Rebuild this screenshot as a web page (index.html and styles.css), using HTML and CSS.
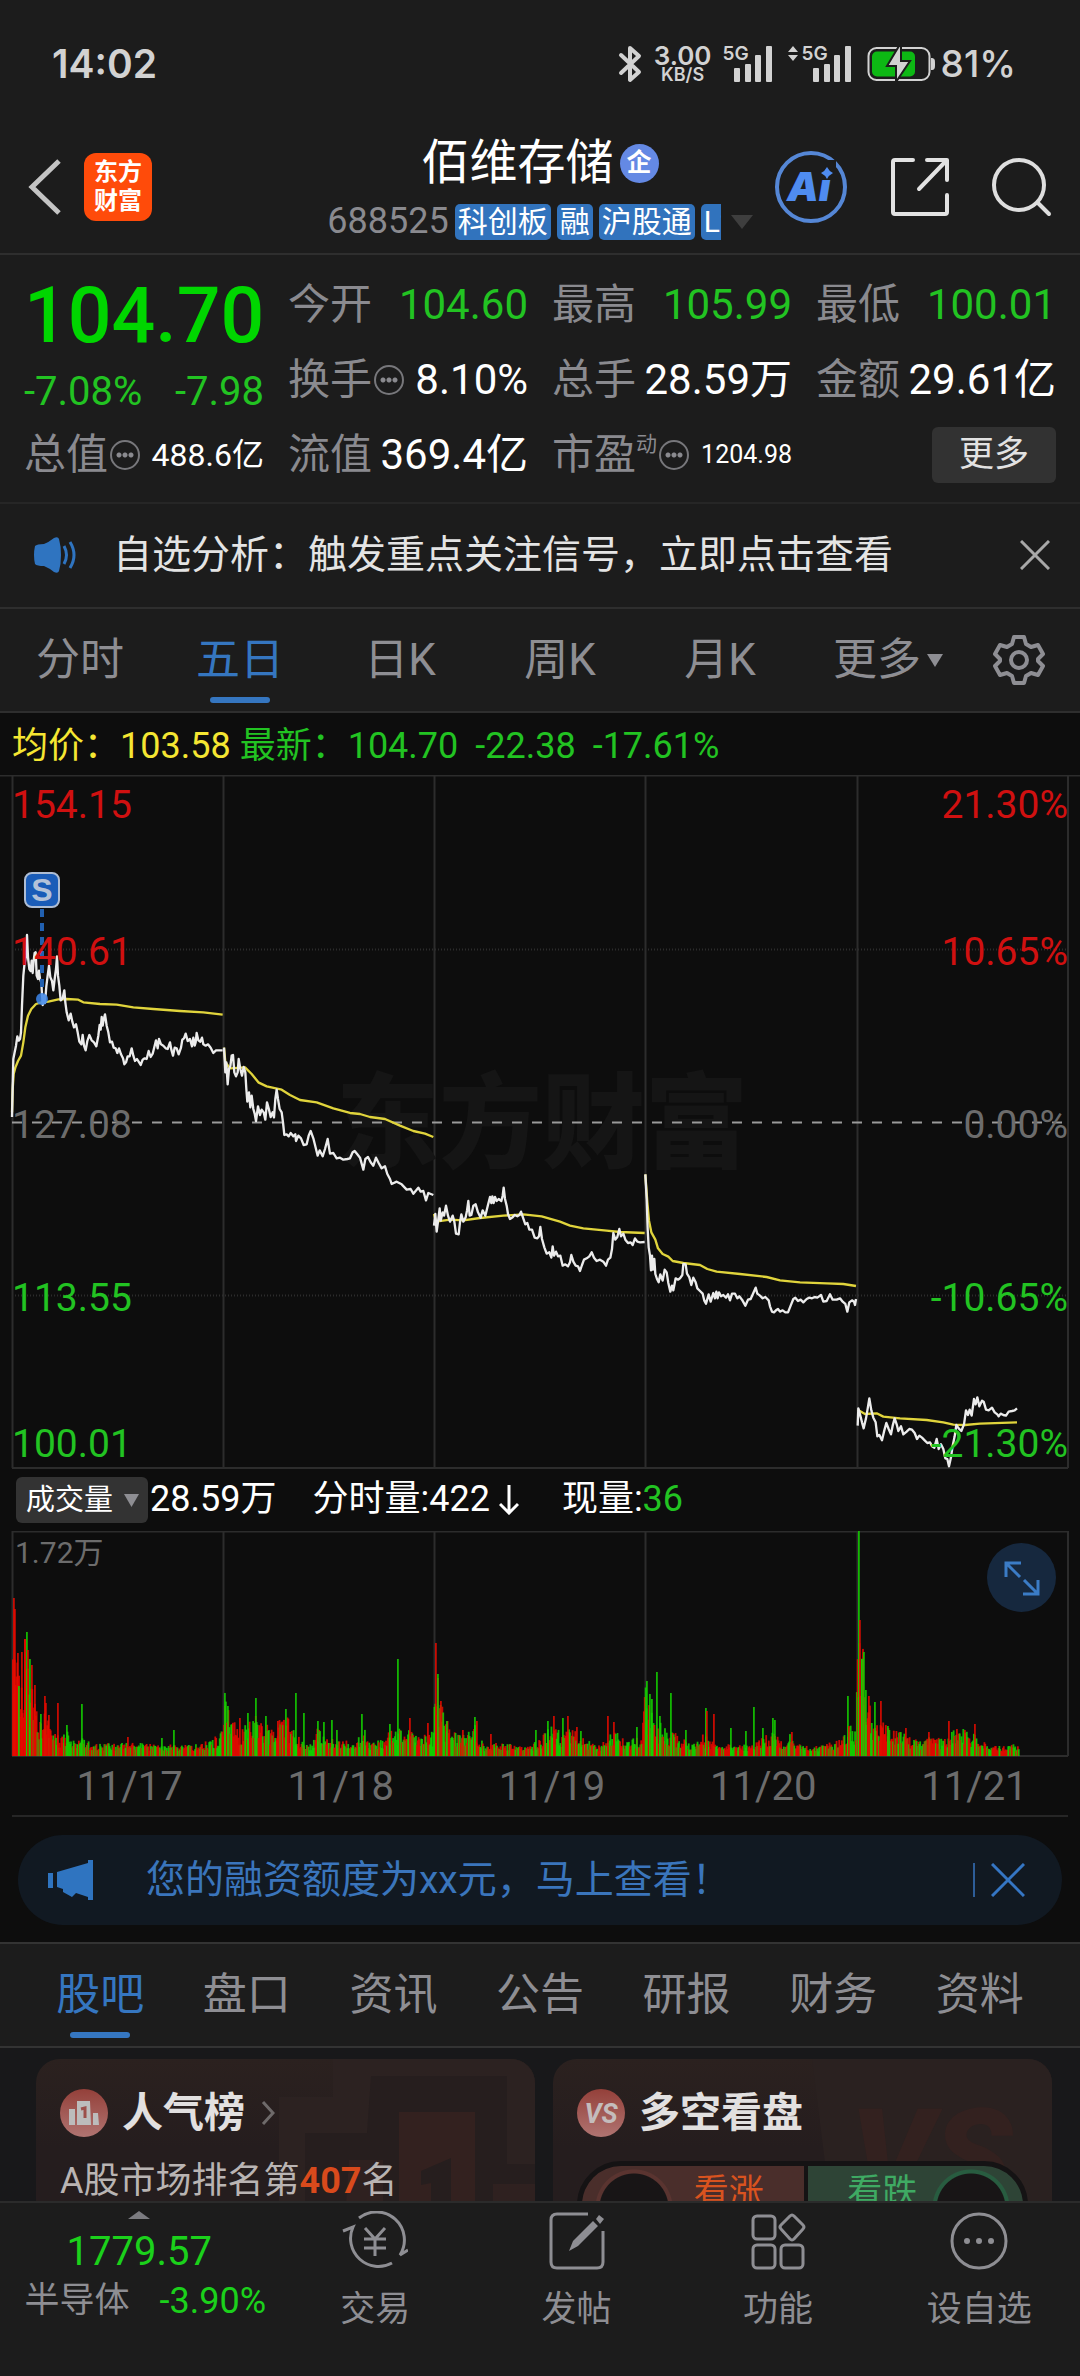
FILE: index.html
```html
<!DOCTYPE html>
<html lang="zh-CN">
<head>
<meta charset="utf-8">
<meta name="viewport" content="width=device-width, initial-scale=1">
<title>佰维存储 688525</title>
<link rel="stylesheet" href="styles.css">
</head>
<body>
<div class="app">
  <div class="status">
    <span class="status-time">14:02</span>
    <div class="status-right">
      <svg class="bt" width="24" height="38" viewBox="0 0 24 38" fill="none" stroke="currentColor" stroke-width="4" stroke-linejoin="round" stroke-linecap="round"><path d="M3 10 21 27 12 35V3l9 8L3 28"/></svg>
      <span class="speed"><b>3.00</b><small>KB/S</small></span>
      <span class="sim"><span>5G</span>
        <svg width="38" height="36" viewBox="0 0 38 36" fill="currentColor"><rect y="22" width="6" height="14" rx="1"/><rect x="11" y="18" width="6" height="18" rx="1"/><rect x="21" y="9" width="6" height="27" rx="1"/><rect x="32" width="6" height="36" rx="1"/></svg>
      </span>
      <span class="sim sim-two">
        <svg class="updown" width="10" height="15" viewBox="0 0 10 15" fill="currentColor"><path d="M5 0l5 6H0zM5 15l5-6H0z"/></svg>
        <span>5G</span>
        <svg width="38" height="36" viewBox="0 0 38 36" fill="currentColor"><rect y="22" width="6" height="14" rx="1"/><rect x="11" y="18" width="6" height="18" rx="1"/><rect x="21" y="9" width="6" height="27" rx="1"/><rect x="32" width="6" height="36" rx="1"/></svg>
      </span>
      <svg class="battery" width="68" height="36" viewBox="0 0 68 36"><rect x="1.500" y="2" width="61" height="32" rx="8" fill="none" stroke="#d2d2d2" stroke-width="2"/><rect x="5" y="5.500" width="43" height="25" rx="5" fill="#0db814"/><path d="M64 12c4 0 4 2 4 6s0 6-4 6z" fill="#d2d2d2"/><path d="M32 0 20 20h9v16l14-21h-9V0z" fill="#d2d2d2" stroke="#1c1c1c" stroke-width="2"/></svg>
      <span class="percent">81%</span>
    </div>
  </div>

  <header class="header">
    <div class="header-left">
      <button class="icon-btn" aria-label="返回"><svg width="34" height="56" viewBox="0 0 34 56" fill="none" stroke="#c4c4c4" stroke-width="5"><path d="M31 2 4 28l27 26"/></svg></button>
      <a class="logo" href="#">东方<br>财富</a>
    </div>
    <div class="header-title">
      <h1>佰维存储<span class="badge">企</span></h1>
      <div class="code-row">
        <span class="code">688525</span>
        <div class="tags"><span>科创板</span><span>融</span><span>沪股通</span><span class="tag-cut">L2</span></div>
        <svg width="22" height="16" viewBox="0 0 22 16"><path d="M0 1h22L11 15z" fill="#3e3e3e"/></svg>
      </div>
    </div>
    <div class="header-right">
      <button class="icon-btn" aria-label="Ai"><svg width="74" height="74" viewBox="0 0 74 74"><circle cx="37" cy="37" r="34" fill="none" stroke="#5587d6" stroke-width="4"/><text x="13" y="51" class="ai-text">Ai</text><rect x="45" y="10" width="17" height="20" fill="#1c1c1c"/><path d="M53 17q2 4 6 6-4 2-6 6-2-4-6-6 4-2 6-6z" fill="#4f8cf0"/></svg></button>
      <button class="icon-btn" aria-label="分享"><svg width="60" height="60" viewBox="0 0 60 60" fill="none" stroke="#e2e2e2" stroke-width="4" stroke-linecap="round" stroke-linejoin="round"><path d="M23 3H5q-2 0-2 2v50q0 2 2 2h50q2 0 2-2V38M37 3h20v20M55 5 29 32"/></svg></button>
      <button class="icon-btn" aria-label="搜索"><svg width="60" height="60" viewBox="0 0 60 60" fill="none" stroke="#dedede" stroke-width="4" stroke-linecap="round"><circle cx="27" cy="28" r="25"/><path d="M46 46l11 11"/></svg></button>
    </div>
  </header>

  <section class="quote">
    <div class="price-cell">
      <div class="price">104.70</div>
      <div class="change"><span>-7.08%</span><span>-7.98</span></div>
    </div>
    <div class="cell"><span class="label">今开</span><span class="val green">104.60</span></div>
    <div class="cell"><span class="label">最高</span><span class="val green">105.99</span></div>
    <div class="cell"><span class="label">最低</span><span class="val green">100.01</span></div>
    <div class="cell"><span class="label">换手<i class="dots"></i></span><span class="val">8.10%</span></div>
    <div class="cell"><span class="label">总手</span><span class="val">28.59万</span></div>
    <div class="cell"><span class="label">金额</span><span class="val">29.61亿</span></div>
    <div class="cell"><span class="label">总值<i class="dots"></i></span><span class="val val-mid">488.6亿</span></div>
    <div class="cell"><span class="label">流值</span><span class="val">369.4亿</span></div>
    <div class="cell"><span class="label">市盈<sup>动</sup><i class="dots"></i></span><span class="val val-small">1204.98</span></div>
    <div class="cell cell-end"><button class="more-btn">更多</button></div>
  </section>

  <section class="notice">
    <svg width="46" height="36" viewBox="0 0 46 36"><path d="M2 9q2-2 9-2 5-2 10-6 4-2 5 1 2 7 2 16t-2 16q-1 3-5 1-5-4-10-6-7 0-9-2-2-9 0-18z" fill="#2f74c0"/><path d="M31 9q5 9 0 18M37 5q8 13 0 26" fill="none" stroke="#2f74c0" stroke-width="3"/></svg>
    <p>自选分析：触发重点关注信号，立即点击查看</p>
    <button class="icon-btn" aria-label="关闭"><svg width="30" height="30" viewBox="0 0 30 30" stroke="#a8a8a8" stroke-width="3"><path d="M1 1l28 28M29 1 1 29"/></svg></button>
  </section>

  <nav class="chart-tabs">
    <button>分时</button><button class="active">五日</button><button>日K</button><button>周K</button><button>月K</button>
    <button>更多<svg width="16" height="13" viewBox="0 0 16 13"><path d="M0 0h16L8 13z" fill="#8e8e93"/></svg></button>
    <button aria-label="设置"><svg width="52" height="52" viewBox="0 0 52 52" fill="none" stroke="#8e8e93" stroke-width="4" stroke-linejoin="round"><path d="M21 3h10l2 7 5 3 7-2 5 9-5 5v2l5 5-5 9-7-2-5 3-2 7H21l-2-7-5-3-7 2-5-9 5-5v-2l-5-5 5-9 7 2 5-3z"/><circle cx="26" cy="26" r="8"/></svg></button>
  </nav>

  <main class="content">
    <div class="chart-info"><span class="yellow">均价：103.58</span><span class="green">最新：104.70</span><span class="green gap">-22.38</span><span class="green gap">-17.61%</span></div>

    <svg class="price-chart" viewBox="0 776 1080 694" role="img" aria-label="五日分时走势">
      <g class="grid-lines">
        <path d="M0 776.500H1080M12.500 777V1469M223.500 777V1469M434.500 777V1469M645.500 777V1469M857.500 777V1469M1068 777V1469M12 1469H1068"/>
        <path d="M12 950.500H1068M12 1296.500H1068" stroke-dasharray="1 2"/>
      </g>
      <text class="watermark" x="336" y="1161">东方财富</text>
      <path d="M12 1123.500H1068" stroke="#9a9a9a" stroke-width="2" stroke-dasharray="10 10"/>
      <g class="avg">
        <polyline transform="translate(0 780) scale(.33333)" points="36,1000 38,930 41,885 46,866 54,846 63,830 70,790 76,745 84,710 94,690 108,675 125,670 145,668 175,661 200,660 235,662 250,670 300,675 350,677 400,685 460,690 540,696 610,700 668,707"/>
        <polyline transform="translate(0 780) scale(.33333)" points="672,806 676,850 690,868 735,865 755,885 775,910 800,922 845,932 870,948 900,963 950,970 1000,988 1050,1002 1080,1005 1110,1014 1155,1020 1200,1040 1240,1056 1275,1064 1300,1074"/>
        <polyline transform="translate(420 1000) scale(.33333)" points="42,645 48,668 90,662 130,664 180,657 250,650 310,646 365,652 420,668 450,680 490,688 560,695 600,699 674,702"/>
        <polyline transform="translate(420 1000) scale(.33333)" points="676,526 682,610 687,665 694,700 706,722 714,748 728,765 745,773 758,786 790,792 840,798 862,810 890,818 960,825 1040,834 1080,844 1140,850 1220,853 1270,855 1308,861"/>
        <polyline transform="translate(640 1150) scale(.33333)" points="653,782 675,795 710,793 730,803 780,808 860,813 910,820 940,827 975,828 1020,824 1131,820"/>
      </g>
      <g class="last">
        <polyline transform="translate(0 780) scale(.33333)" points="36,1014 38,920 40,840 44,820 48,800 52,772 56,785 60,780 63,760 66,680 70,590 73,560 78,530 81,468 84,535 88,570 92,576 95,545 98,582 101,545 104,522 107,520 110,590 114,600 117,575 120,600 124,612 128,678 132,650 135,672 139,622 143,590 147,560 151,595 156,606 160,634 164,600 168,570 171,532 174,590 178,620 182,664 188,658 193,634 196,670 200,700 206,724 212,704 217,728 222,745 228,736 233,760 238,788 244,796 248,768 252,800 257,814 262,786 268,768 275,784 282,790 289,802 295,770 299,738 302,752 305,714 308,740 311,722 315,706 320,740 325,760 330,790 336,788 341,806 347,808 352,822 357,808 363,826 369,838 373,856 378,850 383,832 389,832 395,808 400,830 405,846 411,840 416,848 422,858 428,842 434,838 440,840 446,816 452,834 458,824 464,800 468,784 473,808 477,780 483,796 490,800 497,808 503,810 510,790 514,812 519,830 524,806 530,808 536,826 543,806 547,782 552,778 557,764 563,786 570,780 576,802 580,776 584,800 587,790 590,762 595,784 601,788 606,776 610,796 617,800 624,796 632,806 640,822 648,814 656,814 668,814"/>
        <polyline transform="translate(0 780) scale(.33333)" points="672,806 676,880 679,850 683,916 687,870 691,862 695,830 699,828 703,880 708,892 713,880 716,840 721,870 726,890 731,864 736,880 739,930 742,968 747,940 751,985 755,950 760,990 764,1004 768,1026 774,982 780,1008 785,992 791,1000 796,1022 801,970 806,988 812,1014 818,1000 822,1015 826,960 830,932 834,960 839,990 845,1000 849,1030 853,1068 860,1066 866,1072 872,1062 880,1072 886,1066 888,1086 895,1070 903,1078 911,1098 920,1096 926,1070 932,1056 940,1078 948,1110 953,1130 959,1114 968,1132 975,1110 983,1080 990,1124 1000,1122 1010,1138 1020,1136 1030,1142 1042,1140 1050,1138 1058,1120 1064,1116 1072,1126 1080,1136 1090,1172 1096,1140 1104,1134 1112,1150 1120,1160 1128,1136 1136,1152 1145,1168 1155,1162 1162,1185 1170,1200 1175,1215 1190,1208 1205,1216 1220,1232 1232,1230 1240,1244 1255,1226 1262,1238 1270,1236 1278,1264 1285,1242 1300,1248"/>
        <polyline transform="translate(420 1000) scale(.33333)" points="42,680 46,645 50,698 55,660 59,628 62,665 68,640 72,650 78,620 84,650 90,668 98,650 103,668 108,704 116,706 120,670 124,646 130,668 137,655 141,635 145,606 149,650 154,648 160,620 167,616 174,640 182,656 188,634 196,650 203,622 210,594 214,612 217,592 221,612 225,594 230,606 236,600 244,606 248,590 251,566 255,600 260,620 264,645 270,660 278,655 284,648 292,652 298,648 303,638 309,656 316,676 322,672 328,692 336,692 344,716 352,718 357,712 361,684 366,720 373,745 380,764 388,760 394,776 398,742 402,770 408,758 414,772 421,770 428,800 436,796 444,802 450,790 454,768 460,788 467,800 474,802 480,816 486,798 492,782 500,778 508,772 515,760 522,776 530,786 540,782 550,788 558,800 564,782 571,776 576,750 580,702 586,722 592,714 598,690 603,712 610,704 616,722 624,732 632,730 638,738 645,718 652,728 660,730 674,729"/>
        <polyline transform="translate(420 1000) scale(.33333)" points="676,526 680,600 683,690 686,745 690,770 693,814 696,770 699,812 703,780 706,825 711,840 716,850 721,826 728,845 734,812 740,820 745,852 751,878 756,860 760,874 767,838 774,842 780,838 787,828 790,795 797,796 801,824 808,835 814,858 820,836 827,850 832,868 840,876 848,884 853,905 858,914 866,886 872,908 880,882 885,898 889,878 893,898 897,880 903,892 910,888 918,896 924,886 930,904 936,884 945,884 952,898 958,892 966,902 976,920 984,902 992,900 1000,882 1007,866 1012,884 1020,890 1028,898 1036,894 1046,904 1050,922 1056,938 1062,940 1068,934 1074,930 1080,938 1088,934 1096,940 1104,940 1112,920 1120,900 1126,896 1134,906 1142,902 1150,910 1160,900 1168,896 1176,898 1184,894 1192,896 1203,888 1210,908 1220,906 1230,886 1238,902 1250,902 1260,898 1268,908 1276,915 1282,938 1288,910 1296,904 1302,908 1305,918 1308,900"/>
        <polyline transform="translate(640 1150) scale(.33333)" points="653,830 655,778 661,800 666,820 671,838 678,808 682,785 688,748 694,784 700,806 707,820 712,862 718,858 726,874 732,848 739,822 746,840 753,856 758,830 764,808 770,826 775,846 783,832 790,856 800,848 808,840 816,842 824,852 831,870 838,860 846,866 854,874 862,882 870,880 876,892 883,896 890,870 896,900 903,886 910,900 916,928 922,930 927,952 933,925 938,890 944,862 949,828 956,838 964,846 972,826 978,784 984,798 989,782 995,800 1002,750 1007,766 1012,745 1018,772 1026,755 1031,758 1038,782 1046,784 1056,776 1064,790 1072,796 1076,802 1082,794 1090,798 1098,800 1106,788 1116,786 1124,784 1131,778"/>
      </g>
      <path d="M42 910V992" stroke="#2160b0" stroke-width="4" stroke-dasharray="8 6"/>
      <circle cx="42" cy="1000" r="6" fill="#3d86ea" opacity=".85"/>
      <rect x="25" y="874" width="34" height="34" rx="7" fill="#1a5cb8" stroke="#aebdd4" stroke-width="2"/>
      <text class="sell-mark" x="42" y="902">S</text>
      <g class="axis">
        <text class="up" x="12" y="819">154.15</text><text class="up" x="12" y="966">140.61</text><text class="flat" x="12" y="1139">127.08</text><text class="down" x="12" y="1312">113.55</text><text class="down" x="12" y="1458">100.01</text>
      </g>
      <g class="axis axis-right">
        <text class="up" x="1068" y="819">21.30%</text><text class="up" x="1068" y="966">10.65%</text><text class="flat" x="1068" y="1139">0.00%</text><text class="down" x="1068" y="1312">-10.65%</text><text class="down" x="1068" y="1458">-21.30%</text>
      </g>
    </svg>

    <div class="vol-info">
      <button class="vol-select">成交量<svg width="15" height="13" viewBox="0 0 15 13"><path d="M0 0h15L7.500 13z" fill="#8e8e93"/></svg></button>
      <span class="vol-total">28.59万</span><span class="vol-minute">分时量:422<svg width="20" height="30" viewBox="0 0 20 30" fill="none" stroke="#fff" stroke-width="3"><path d="M10 0v28M1 19l9 9 9-9"/></svg></span><span>现量:<span class="green">36</span></span>
    </div>

    <div class="vol-wrap">
      <svg class="vol-chart" viewBox="0 1532 1080 228" role="img" aria-label="成交量">
        <path class="frame" d="M12 1532.500H1068M12.500 1532V1757M223.500 1532V1757M434.500 1532V1757M645.500 1532V1757M857.500 1532V1757M1068 1532V1757M12 1757H1068"/>
        <g id="bars"></g>
        <text class="vol-max" x="15" y="1564">1.72万</text>
      </svg>
      <button class="expand" aria-label="全屏"><svg width="36" height="36" viewBox="0 0 36 36" fill="none" stroke="#3b7cc6" stroke-width="3"><path d="M2 17V3h15M3 4l13 13M34 20v14H19M33 33 20 20"/></svg></button>
    </div>
    <div class="dates"><span>11/17</span><span>11/18</span><span>11/19</span><span>11/20</span><span>11/21</span></div>

    <div class="promo">
      <svg width="46" height="40" viewBox="0 0 46 40" fill="#2f74c0"><path d="M0 13h5v15H0zM9 12 40 3V0h5v40h-5v-3l-12-4-4 4-9-5v-3l-6-2z"/></svg>
      <p>您的融资额度为xx元，马上查看！</p>
      <button class="icon-btn promo-close" aria-label="关闭"><svg width="34" height="34" viewBox="0 0 34 34" stroke="#3576c4" stroke-width="3"><path d="M1 1l32 32M33 1 1 33"/></svg></button>
    </div>

    <nav class="info-tabs"><button class="active">股吧</button><button>盘口</button><button>资讯</button><button>公告</button><button>研报</button><button>财务</button><button>资料</button></nav>

    <div class="cards">
      <article class="card">
        <svg class="card-art" width="300" height="160" viewBox="0 0 300 160"><path d="M98 0H300V160H44V38H98z" fill="#2c2221"/><path d="M136 17H272V105H300V160H70V74H132z" fill="#261e1e"/><path d="M164 53H240V160H164z" fill="#33211f"/><path d="M114 101H148V160H110zM258 125H300V160H258z" fill="#2f2120"/><path d="M186 112 216 99V160H196V124L186 126z" fill="#261e1e"/></svg>
        <h2><svg width="48" height="48" viewBox="0 0 48 48"><defs><linearGradient id="rd" x2="0" y2="1"><stop stop-color="#94403a"/><stop offset="1" stop-color="#b07471"/></linearGradient></defs><circle cx="24" cy="24" r="24" fill="url(#rd)"/><path d="M9 20h6v16H9zM17 12h13l1 24H17zM33 24h5l1 12h-6z" fill="#bcbcbc"/><path d="M21 20l4-1v10" fill="none" stroke="#9c4f4a" stroke-width="3"/></svg>人气榜<svg class="chev" width="14" height="24" viewBox="0 0 14 24" fill="none" stroke="#6e6a6a" stroke-width="3"><path d="M2 1l10 11L2 23"/></svg></h2>
        <p>A股市场排名第<b>407</b>名</p>
      </article>
      <article class="card">
        <svg class="card-art" width="300" height="160" viewBox="0 0 300 160"><path d="M60 0H300V160H80z" fill="#2a2120"/><text x="98" y="142" class="art-vs">VS</text></svg>
        <h2><svg width="48" height="48" viewBox="0 0 48 48"><circle cx="24" cy="24" r="24" fill="url(#rd)"/><text x="24" y="34" class="vs">VS</text></svg>多空看盘</h2>
        <div class="vote"><button class="vote-up">看涨</button><button class="vote-down">看跌</button></div>
      </article>
    </div>
  </main>

  <nav class="bottom">
    <a class="index" href="#">
      <svg width="22" height="8" viewBox="0 0 22 8"><path d="M11 0 22 8H0z" fill="#7b7b80"/></svg>
      <span class="index-val">1779.57</span>
      <span class="index-row"><span>半导体</span><span class="index-pct">-3.90%</span></span>
    </a>
    <a href="#"><svg width="66" height="60" viewBox="0 0 66 60" fill="none" stroke="#8e8e93" stroke-width="3"><path d="M17 7A28 28 0 0 1 58 44l8-5M50 52A28 28 0 0 1 11 16l-10 4"/><path d="M23 17l10 11 10-11M33 28v17M22 28h22M22 37h22"/></svg>交易</a>
    <a href="#"><svg width="60" height="60" viewBox="0 0 60 60" fill="none" stroke="#8e8e93" stroke-width="3"><path d="M41 3H10q-6 0-6 6v42q0 6 6 6h40q6 0 6-6V20"/><path d="M22 40l4-10L46 10l5 5-20 20zM49 8l3-4 5 4-4 5z" fill="#8e8e93" stroke="none"/></svg>发帖</a>
    <a href="#"><svg width="60" height="60" viewBox="0 0 60 60" fill="none" stroke="#8e8e93" stroke-width="3"><rect x="5" y="5" width="22" height="23" rx="4"/><rect x="5" y="34" width="22" height="23" rx="4"/><rect x="33" y="34" width="22" height="23" rx="4"/><path d="M42 5q2-2 4 0l9 9q2 2 0 4l-9 10q-2 2-4 0l-9-10q-2-2 0-4z"/></svg>功能</a>
    <a href="#"><svg width="60" height="60" viewBox="0 0 60 60"><circle cx="30" cy="30" r="27" fill="none" stroke="#8e8e93" stroke-width="3"/><g fill="#8e8e93"><circle cx="18" cy="30" r="3"/><circle cx="30" cy="30" r="3"/><circle cx="42" cy="30" r="3"/></g></svg>设自选</a>
  </nav>
</div>
<script src="volume.js"></script>
</body>
</html>
```
FILE: styles.css
```css
* { box-sizing: border-box; }
body, h1, h2, p { margin: 0; }
body {
  background: #1c1c1c;
  color: #fff;
  font-family: Roboto, "Noto Sans CJK SC", sans-serif;
  font-size: 36px;
  line-height: 1.2;
}
button {
  margin: 0;
  padding: 0;
  border: 0;
  background: none;
  color: inherit;
  font: inherit;
}
a { color: inherit; text-decoration: none; }
svg { display: block; flex: none; }
.green { color: #22c322; }
.yellow { color: #f5e632; }

.app { display: flex; flex-direction: column; height: 100vh; }
.status, .header, .quote, .notice, .chart-tabs, .bottom { flex: none; }

/* status bar */
.status {
  display: flex;
  justify-content: space-between;
  align-items: center;
  height: 128px;
  padding: 0 64px 0 52px;
  color: #d2d2d2;
  font-family: Inter, sans-serif;
  font-weight: 600;
}
.status-time { font-size: 39px; }
.status-right { display: flex; align-items: center; }
.speed { display: flex; flex-direction: column; align-items: center; width: 60px; margin-left: 11px; }
.speed b { font-size: 26px; line-height: 21px; font-weight: 600; }
.speed small { font-size: 18px; line-height: 17px; }
.sim { display: flex; align-items: flex-start; margin-left: 10px; font-size: 19px; line-height: 15px; }
.sim span { width: 24px; margin-right: -13px; }
.sim-two { margin-left: 16px; }
.updown { margin-right: 4px; }
.battery { margin-left: 16px; }
.percent { margin-left: 6px; font-size: 37px; font-weight: 500; }

/* title bar */
.header {
  display: grid;
  grid-template-columns: 1fr auto 1fr;
  align-items: center;
  padding: 5px 28px 13px;
  border-bottom: 2px solid #2e2e2e;
}
.header-left, .header-right { display: flex; align-items: center; }
.header-left { gap: 22px; }
.header-right { justify-content: flex-end; gap: 42px; }
.logo {
  width: 68px;
  height: 68px;
  padding-top: 5px;
  border-radius: 12px;
  background: #ff4b0a;
  font-size: 24px;
  font-weight: 700;
  line-height: 29px;
  text-align: center;
}
.header-title { display: flex; flex-direction: column; align-items: center; gap: 11px; }
.header-title h1 { display: flex; align-items: center; gap: 6px; font-size: 48px; font-weight: 400; line-height: 60px; }
.badge {
  width: 39px;
  height: 39px;
  border-radius: 50%;
  background: #6489e4;
  font-size: 25px;
  font-weight: 700;
  line-height: 38px;
  text-align: center;
}
.code-row { display: flex; align-items: center; height: 36px; }
.code { margin-right: 6px; color: #8a8a8f; font-size: 36px; }
.tags { display: flex; gap: 6px; margin-right: 10px; }
.tags span {
  padding: 0 3px;
  border-radius: 5px;
  background: #3173bd;
  font-size: 30px;
  line-height: 36px;
}
.tags .tag-cut { width: 20px; border-radius: 5px 0 0 5px; overflow: hidden; }
.ai-text { fill: #4f8cf0; font: italic 900 40px Inter, sans-serif; }

/* quote */
.quote {
  display: grid;
  grid-template-columns: repeat(4, minmax(0, 1fr));
  grid-auto-rows: 75px;
  column-gap: 24px;
  padding: 12px 24px 10px;
  border-bottom: 2px solid #262626;
}
.price-cell { grid-row: span 2; padding-top: 12px; }
.price { color: #00d600; font-size: 77px; font-weight: 500; line-height: 75px; white-space: nowrap; }
.change { display: flex; justify-content: space-between; margin-top: 13px; color: #22c322; font-size: 40px; line-height: 50px; }
.cell { display: flex; align-items: center; justify-content: space-between; white-space: nowrap; }
.cell-end { justify-content: flex-end; }
.label { display: flex; align-items: center; color: #8a8a8f; font-size: 42px; line-height: 50px; }
.label sup { align-self: flex-start; font-size: 21px; line-height: 28px; }
.val { font-size: 42px; line-height: 50px; }
.val-mid { font-size: 32px; }
.val-small { font-size: 25px; }
.dots {
  width: 30px;
  height: 30px;
  margin-left: 2px;
  padding: 0 4px;
  border: 2px solid #77777b;
  border-radius: 50%;
  background: radial-gradient(circle, #8a8a8f 2px, transparent 3px) 0 0 / 6px 26px repeat-x;
  background-origin: content-box;
  background-clip: content-box;
}
.more-btn { width: 124px; height: 56px; border-radius: 6px; background: #323232; color: #e2e2e2; font-size: 35px; line-height: 54px; }

/* notice */
.notice { display: flex; align-items: center; padding: 23px 30px 24px 33px; border-bottom: 2px solid #2e2e2e; }
.notice p { flex: 1; margin-left: 34px; color: #e4e4e4; font-size: 39px; line-height: 56px; }

/* chart tabs */
.chart-tabs {
  display: grid;
  grid-template-columns: repeat(5, 160fr) 176fr 86fr;
  height: 104px;
  padding-right: 18px;
  border-bottom: 2px solid #2e2e2e;
}
.chart-tabs button, .info-tabs button {
  position: relative;
  display: flex;
  align-items: center;
  justify-content: center;
  gap: 6px;
  color: #8e8e93;
  font-size: 44px;
}
.chart-tabs .active, .info-tabs .active { color: #3576c0; }
.active::after {
  content: "";
  position: absolute;
  bottom: 8px;
  width: 60px;
  height: 6px;
  border-radius: 3px;
  background: #3576c0;
}

.content { flex: 1 1 0; min-height: 0; overflow: hidden; background: #0d0d0d; }
.chart-info { display: flex; padding: 4px 12px 0; line-height: 58px; white-space: nowrap; }
.chart-info .green { margin-left: 9px; }
.chart-info .gap { margin-left: 17px; }
.price-chart, .vol-chart { width: 100%; height: auto; }
.grid-lines, .frame { fill: none; stroke: #2c2c2c; stroke-width: 2; }
.avg, .last { fill: none; stroke-width: 7; stroke-linejoin: round; }
.avg { stroke: #e0d43c; }
.last { stroke: #ececec; }
.watermark { fill: #151515; font: 900 103px "Noto Sans CJK SC", sans-serif; }
.sell-mark { fill: #b4c2d8; font: 700 32px "Liberation Sans", sans-serif; text-anchor: middle; }
.axis { font-size: 39px; }
.axis-right { text-anchor: end; }
.up { fill: #d01010; }
.down { fill: #22c322; }
.flat { fill: #6c6c6c; }

/* volume */
.vol-info { display: flex; align-items: center; height: 62px; padding-left: 16px; white-space: nowrap; }
.vol-select {
  display: flex;
  align-items: center;
  gap: 11px;
  height: 46px;
  padding: 0 9px 0 10px;
  border-radius: 6px;
  background: #333;
  font-size: 29px;
}
.vol-total { margin: 0 36px 0 2px; }
.vol-minute { display: flex; align-items: center; gap: 9px; margin-right: 43px; }
.vol-wrap { position: relative; }
.vol-max { fill: #6c6c6c; font-size: 30px; }
.expand {
  position: absolute;
  top: 12px;
  right: 24px;
  display: flex;
  align-items: center;
  justify-content: center;
  width: 69px;
  height: 69px;
  border-radius: 50%;
  background: #16283e;
}
.dates {
  display: grid;
  grid-template-columns: repeat(5, 1fr);
  margin: 0 12px;
  border-bottom: 2px solid #262626;
  color: #6c6c6c;
  font-size: 40px;
  line-height: 56px;
  text-align: center;
}
.dates span { padding-left: 24px; }

/* promo */
.promo {
  display: flex;
  align-items: center;
  height: 90px;
  margin: 18px 18px 17px;
  padding: 0 37px 0 30px;
  border-radius: 45px;
  background: #111922;
  color: #3a75bc;
}
.promo p { flex: 1; margin-left: 52px; font-size: 39px; line-height: 56px; }
.promo-close { padding-left: 16px; border-left: 2px solid #2d5d98; }

.info-tabs {
  display: grid;
  grid-template-columns: repeat(7, 1fr);
  height: 106px;
  padding: 0 27px;
  border-top: 2px solid #333;
  border-bottom: 2px solid #333;
  background: #1c1c1c;
}

/* cards */
.cards {
  display: grid;
  grid-template-columns: 1fr 1fr;
  gap: 18px;
  padding: 11px 28px 0 36px;
  background: #18181a;
}
.card { position: relative; height: 220px; padding: 30px 24px; border-radius: 24px; background: linear-gradient(#2b211f, #251d1e 40%); overflow: hidden; }
.card-art { position: absolute; top: 0; right: 0; }
.card h2, .card p, .vote { position: relative; }
.card h2 { display: flex; align-items: center; gap: 14px; color: #e2e0e0; font-size: 41px; font-weight: 700; line-height: 48px; }
.card p { margin-top: 22px; color: #b9b4b3; line-height: 44px; }
.card b { color: #d94a1c; font-weight: 700; }
.vs { fill: #c4bcbc; font: italic 700 27px Roboto, sans-serif; text-anchor: middle; }
.art-vs { fill: #33211f; font: italic 900 130px Roboto, sans-serif; }
.chev { margin-left: 2px; }
.vote { display: flex; gap: 4px; height: 88px; margin-top: 24px; border: 5px solid #151314; border-radius: 44px; background: #151314; overflow: hidden; }
.vote button { flex: 1; padding-bottom: 24px; font-size: 35px; line-height: 50px; }
.vote .vote-up { padding-left: 72px; background: radial-gradient(circle at 52px 42px, #181516 34px, #5a3430 35px, #5a3430 38px, #4a2e2b 39px); color: #d9531f; }
.vote .vote-down { padding-right: 66px; background: radial-gradient(circle at calc(100% - 52px) 42px, #181516 34px, #285c40 35px, #285c40 38px, #2e4436 39px); color: #3faa63; }

/* bottom bar */
.bottom {
  display: grid;
  grid-template-columns: 274fr repeat(4, 201fr);
  padding: 8px 0 41px;
  border-top: 2px solid #2b2b2b;
  background: #1c1c1c;
  color: #8e8e93;
  font-size: 35px;
}
.bottom a { display: flex; flex-direction: column; align-items: center; gap: 14px; line-height: 50px; }
.bottom .index { gap: 0; padding: 0 0 0 16px; }
.index > svg { margin-right: 12px; }
.index-val { margin-right: 12px; padding-top: 8px; color: #1bd11b; font-size: 40px; line-height: 50px; }
.index-row { display: flex; gap: 30px; line-height: 48px; white-space: nowrap; }
.index-pct { color: #1bd11b; font-size: 36px; }
```
FILE: volume.js
```js
// Minute volume bars for the five sessions, heights in chart units.
const BASE = 1757;
const trend = [[12,160],[15,110],[20,90],[24,115],[28,90],[34,55],[38,28],[44,48],[50,22],[60,18],[68,22],[75,14],[82,22],[90,10],[120,11],[150,11],[180,8],[200,11],[212,16],[222,25],[224,62],[232,38],[240,24],[256,48],[262,25],[285,40],[292,24],[310,10],[318,28],[330,15],[345,16],[355,10],[361,30],[370,10],[380,14],[396,28],[410,26],[425,18],[432,24],[436,90],[440,50],[448,30],[460,22],[475,28],[483,8],[500,12],[520,7],[540,14],[548,28],[560,22],[567,30],[580,16],[600,8],[612,25],[625,14],[640,16],[645,70],[652,34],[665,28],[680,16],[690,12],[700,20],[715,12],[735,8],[750,10],[760,16],[772,24],[780,12],[790,20],[800,8],[820,8],[838,14],[850,28],[855,22],[858,150],[863,90],[870,40],[880,38],[890,26],[905,20],[920,12],[930,18],[945,14],[955,30],[965,22],[975,22],[985,10],[1000,8],[1018,10]];
const peaks = "13,158,r 14,147,r 17,103,r 18,70,g 21,104,r 24,117,r 26,124,g 27,106,r 29,97,g 31,91,r 34,71,r 40,42,g 44,60,r 45,53,r 48,41,r 57,53,r 66,31,g 81,52,g 127,19,r 161,18,g 173,26,g 224,63,g 227,50,g 239,38,r 247,43,g 255,58,g 265,40,g 277,35,r 285,47,g 295,63,g 303,43,g 317,35,g 323,34,g 331,36,g 336,26,g 361,42,g 389,32,g 397,97,g 409,38,r 427,33,r 435,113,r 437,82,g 440,55,r 446,35,g 462,26,r 474,39,g 476,35,r 490,22,r 535,26,g 547,35,g 553,40,r 562,38,g 567,40,r 576,29,r 580,25,g 607,40,r 613,34,r 636,29,g 646,75,g 649,62,g 651,57,g 656,84,g 659,40,g 670,63,g 685,26,g 705,48,g 706,45,r 713,42,r 730,28,g 745,25,g 753,49,g 762,28,g 772,38,g 774,36,g 791,24,r 847,60,g 848,30,r 858,225,g 859,136,r 861,97,g 863,104,g 865,66,g 868,60,r 874,54,g 880,55,r 887,30,g 905,28,r 928,24,r 948,35,r 956,27,r 964,26,r 974,32,r";

let seed = 688525;
const rand = () => (seed = (seed * 16807) % 2147483647) / 2147483647;
const bars = [];
let k = 0;
for (let x = 12; x < 1018; x += 0.88) {
  while (x > trend[k + 1][0]) k++;
  const [x0, y0] = trend[k], [x1, y1] = trend[k + 1];
  const level = y0 + (y1 - y0) * (x - x0) / (x1 - x0);
  const red = x < 24 ? 0.9 : 0.48;
  bars.push([x, 2 + level * (0.3 + 0.75 * rand()), rand() < red ? "r" : "g"]);
}
for (const p of peaks.split(" ")) {
  const [x, h, c] = p.split(",");
  bars.push([+x, +h, c]);
}
const color = { r: "#e60a00", g: "#14d200" };
document.getElementById("bars").innerHTML = bars.map(([x, h, c]) =>
  `<rect x="${x.toFixed(2)}" y="${(BASE - h).toFixed(1)}" width="1.8" height="${h.toFixed(1)}" fill="${color[c]}" opacity=".85"/>`
).join("");
```
